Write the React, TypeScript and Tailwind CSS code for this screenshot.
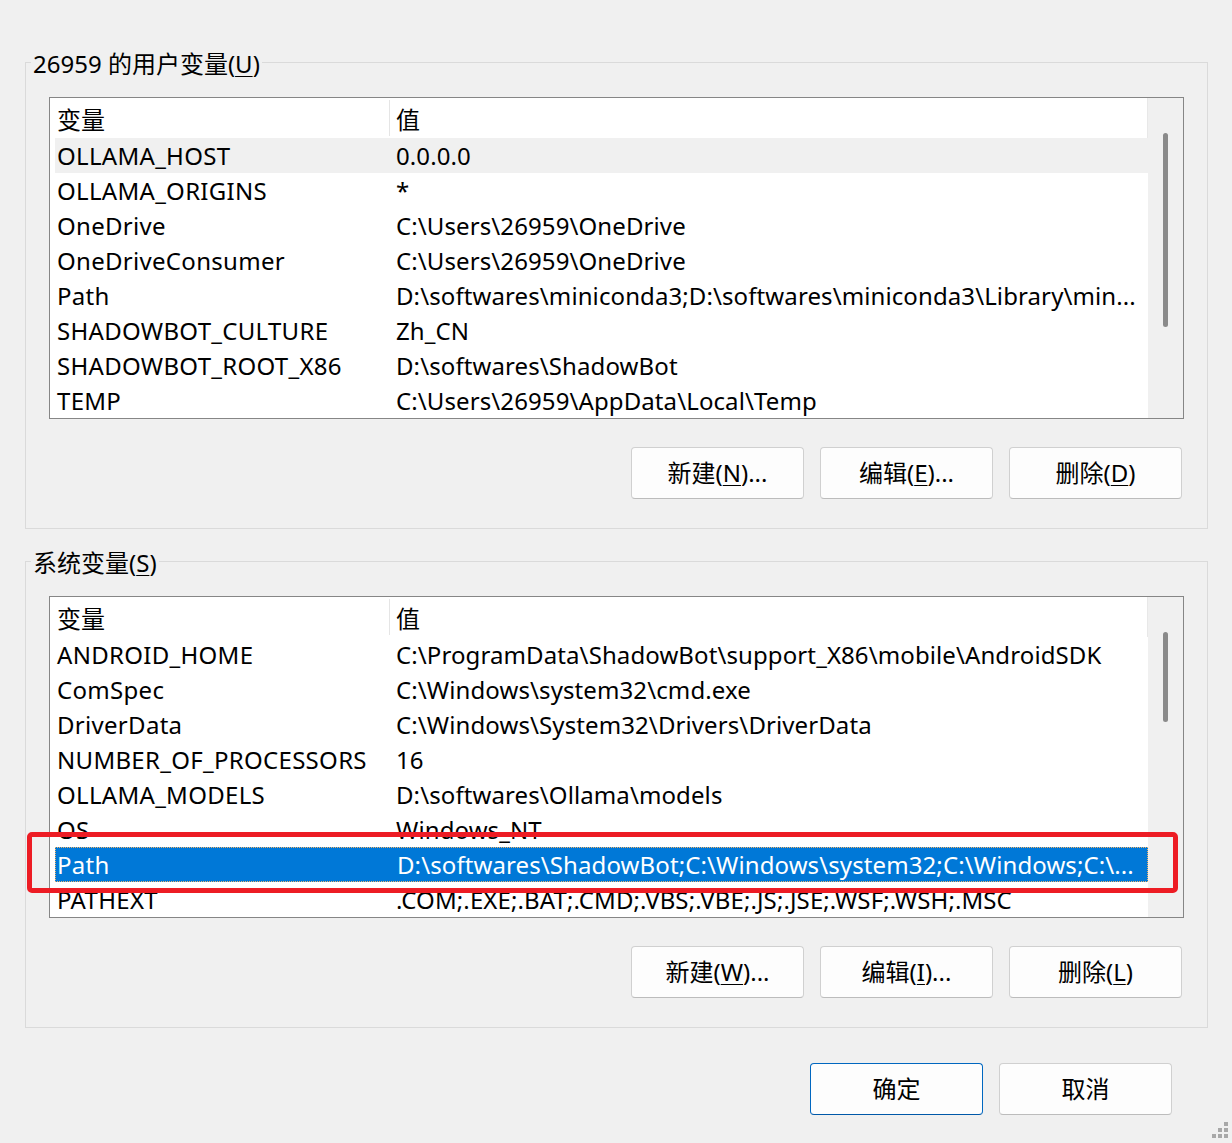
import React from "react";

type Row = { name: string; value: string; hover?: boolean; selected?: boolean };

const USER_VARS: Row[] = [
  { name: "OLLAMA_HOST", value: "0.0.0.0", hover: true },
  { name: "OLLAMA_ORIGINS", value: "*" },
  { name: "OneDrive", value: String.raw`C:\Users\26959\OneDrive` },
  { name: "OneDriveConsumer", value: String.raw`C:\Users\26959\OneDrive` },
  { name: "Path", value: String.raw`D:\softwares\miniconda3;D:\softwares\miniconda3\Library\min...` },
  { name: "SHADOWBOT_CULTURE", value: "Zh_CN" },
  { name: "SHADOWBOT_ROOT_X86", value: String.raw`D:\softwares\ShadowBot` },
  { name: "TEMP", value: String.raw`C:\Users\26959\AppData\Local\Temp` },
];

const SYSTEM_VARS: Row[] = [
  { name: "ANDROID_HOME", value: String.raw`C:\ProgramData\ShadowBot\support_X86\mobile\AndroidSDK` },
  { name: "ComSpec", value: String.raw`C:\Windows\system32\cmd.exe` },
  { name: "DriverData", value: String.raw`C:\Windows\System32\Drivers\DriverData` },
  { name: "NUMBER_OF_PROCESSORS", value: "16" },
  { name: "OLLAMA_MODELS", value: String.raw`D:\softwares\Ollama\models` },
  { name: "OS", value: "Windows_NT" },
  { name: "Path", value: String.raw`D:\softwares\ShadowBot;C:\Windows\system32;C:\Windows;C:\...`, selected: true },
  { name: "PATHEXT", value: ".COM;.EXE;.BAT;.CMD;.VBS;.VBE;.JS;.JSE;.WSF;.WSH;.MSC" },
];

// label with an underlined access key, e.g. 新建(N)...
function Mnemonic({ before, k, after }: { before: string; k: string; after: string }) {
  return (
    <>
      {before}
      <span className="underline underline-offset-[3px] decoration-1">{k}</span>
      {after}
    </>
  );
}

function Btn({ children, primary }: { children: React.ReactNode; primary?: boolean }) {
  return (
    <button
      className={`w-[173px] h-[52px] rounded-[4px] bg-[#fdfdfd] border text-[24px] text-black flex items-center justify-center ${
        primary ? "border-[#0067c0] border-b-[#0058a8]" : "border-[#d0d0d0] border-b-[#bcbcbc]"
      }`}
    >
      {children}
    </button>
  );
}

function ListView({ rows, thumbTop, thumbHeight }: { rows: Row[]; thumbTop: number; thumbHeight: number }) {
  return (
    <div className="w-[1135px] h-[322px] border border-[#868686] bg-white flex overflow-hidden">
      <div className="flex-1 flex flex-col overflow-hidden">
        {/* column header */}
        <div className="h-[40px] shrink-0 flex items-stretch border-r border-[#e8e8e8]">
          <div className="w-[339px] pl-[7px] pt-[3px] flex items-center">变量</div>
          <div className="w-px bg-[#e5e5e5] my-[2px]" />
          <div className="flex-1 pl-[6px] pt-[3px] flex items-center">值</div>
        </div>
        {rows.map((r) => (
          <div
            key={r.name}
            className={`h-[35px] shrink-0 ml-[5px] flex items-center ${
              r.selected
                ? "bg-[#0078d7] text-white border border-dotted border-[#f2b46a]"
                : r.hover
                ? "bg-[#f0f0f0]"
                : ""
            }`}
          >
            <div className={`w-[334px] whitespace-nowrap overflow-hidden tracking-[0.3px] ${r.selected ? "pl-[1px]" : "pl-[2px]"}`}>{r.name}</div>
            <div className="flex-1 min-w-0 pl-[7px] pr-[6px] truncate tracking-[0.1px]">{r.value}</div>
          </div>
        ))}
      </div>
      {/* vertical scrollbar */}
      <div className="w-[35px] shrink-0 bg-[#f0f0f0] relative">
        <div
          className="absolute left-[15px] w-[5px] rounded-full bg-[#8a8a8a]"
          style={{ top: thumbTop, height: thumbHeight }}
        />
      </div>
    </div>
  );
}

function Group({ title, children }: { title: React.ReactNode; children: React.ReactNode }) {
  return (
    <div className="relative ml-[25px] w-[1183px] border border-[#dadada] pl-[23px] pt-[34px] pb-[29px]">
      <div className="absolute left-[5px] top-[-15px] h-[32px] px-[2px] bg-[#f0f0f0] flex items-center leading-none">
        {title}
      </div>
      {children}
    </div>
  );
}

export default function App() {
  return (
    <div className="relative w-[1232px] h-[1143px] overflow-hidden bg-[#f0f0f0] text-black text-[24px] font-[family-name:'Noto_Sans','Noto_Sans_CJK_SC',sans-serif] pt-[62px]">
      <Group title={<Mnemonic before="26959 的用户变量(" k="U" after=")" />}>
        <ListView rows={USER_VARS} thumbTop={35} thumbHeight={194} />
        <div className="mt-[28px] flex justify-end gap-[16px] w-[1133px]">
          <Btn><Mnemonic before="新建(" k="N" after=")..." /></Btn>
          <Btn><Mnemonic before="编辑(" k="E" after=")..." /></Btn>
          <Btn><Mnemonic before="删除(" k="D" after=")" /></Btn>
        </div>
      </Group>

      <div className="mt-[32px]">
        <Group title={<Mnemonic before="系统变量(" k="S" after=")" />}>
          <ListView rows={SYSTEM_VARS} thumbTop={35} thumbHeight={90} />
          <div className="mt-[28px] flex justify-end gap-[16px] w-[1133px]">
            <Btn><Mnemonic before="新建(" k="W" after=")..." /></Btn>
            <Btn><Mnemonic before="编辑(" k="I" after=")..." /></Btn>
            <Btn><Mnemonic before="删除(" k="L" after=")" /></Btn>
          </div>
        </Group>
      </div>

      <div className="mt-[35px] flex justify-end gap-[16px] pr-[60px]">
        <Btn primary>确定</Btn>
        <Btn>取消</Btn>
      </div>

      {/* red annotation box around the selected Path row */}
      <div className="absolute left-[27px] top-[832px] w-[1151px] h-[61px] border-[5px] border-[#ed1c24] rounded-[5px] pointer-events-none" />

      {/* resize grip */}
      <svg className="absolute right-0 bottom-0" width="24" height="24" viewBox="0 0 24 24">
        <rect x="16" y="3" width="4" height="4" fill="#a8a8a8" />
        <rect x="10" y="9" width="4" height="4" fill="#a8a8a8" />
        <rect x="16" y="9" width="4" height="4" fill="#a8a8a8" />
        <rect x="4" y="15" width="4" height="4" fill="#a8a8a8" />
        <rect x="10" y="15" width="4" height="4" fill="#a8a8a8" />
        <rect x="16" y="15" width="4" height="4" fill="#a8a8a8" />
      </svg>
    </div>
  );
}
